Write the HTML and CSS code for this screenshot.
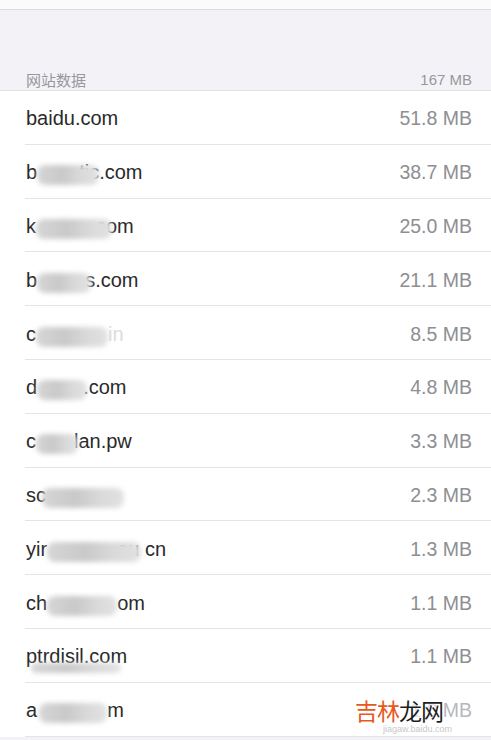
FILE: index.html
```html
<!DOCTYPE html>
<html lang="zh">
<head>
<meta charset="utf-8">
<link rel="stylesheet" href="styles.css">
</head>
<body>
<div class="page">
  <div class="topbar"></div>
  <div class="section-head">
    <span class="head-title">网站数据</span>
    <span class="head-size">167 MB</span>
  </div>
  <ul class="list">
    <li class="row"><span class="site">baidu.com</span><span class="size">51.8 MB</span></li>
    <li class="row"><span class="site">b<span class="smear s-2"></span>tic.com</span><span class="size">38.7 MB</span></li>
    <li class="row"><span class="site">k<span class="smear s-3"></span>com</span><span class="size">25.0 MB</span></li>
    <li class="row"><span class="site">b<span class="smear s-4"></span>s.com</span><span class="size">21.1 MB</span></li>
    <li class="row"><span class="site">c<span class="smear s-5"></span><span class="faint">in</span></span><span class="size">8.5 MB</span></li>
    <li class="row"><span class="site">d<span class="smear s-6"></span>.com</span><span class="size">4.8 MB</span></li>
    <li class="row"><span class="site">c<span class="smear s-7"></span>lan.pw</span><span class="size">3.3 MB</span></li>
    <li class="row"><span class="site">sc<span class="smear s-8"></span></span><span class="size">2.3 MB</span></li>
    <li class="row"><span class="site">yir<span class="smear s-9"></span>ou cn</span><span class="size">1.3 MB</span></li>
    <li class="row"><span class="site">ch<span class="smear s-10"></span>om</span><span class="size">1.1 MB</span></li>
    <li class="row"><span class="site">ptrdisil.com<span class="smear s-11"></span></span><span class="size">1.1 MB</span></li>
    <li class="row"><span class="site">a<span class="smear s-12"></span>m</span><span class="size size-hidden">1.0 MB</span></li>
  </ul>
  <div class="watermark">
    <span class="wm-main"><span class="wm-orange">吉林</span>龙网</span>
    <span class="wm-sub">jiagaw.baidu.com</span>
  </div>
</div>
</body>
</html>
```
FILE: styles.css
```css
* { box-sizing: border-box; }
html, body { margin: 0; padding: 0; }
body {
  width: 491px;
  height: 740px;
  overflow: hidden;
  background: #ffffff;
  font-family: "Liberation Sans", "Noto Sans CJK SC", sans-serif;
}
.page {
  position: relative;
  width: 491px;
  height: 740px;
  background: #f3f3f7;
}
.topbar {
  height: 10px;
  background: #fbfbfc;
  border-bottom: 1px solid #dcdce0;
}
.section-head {
  height: 80px;
  display: flex;
  justify-content: space-between;
  align-items: flex-end;
  padding: 0 19px 1px 26px;
  color: #8e8e93;
}
.head-title { font-family: "Noto Sans CJK SC", sans-serif; font-size: 15px; line-height: 18px; color: #98989c; }
.head-size { font-size: 15px; line-height: 18px; color: #98989c; }
.list {
  list-style: none;
  margin: 0;
  padding: 0 0 0 25px;
  background: #ffffff;
  border-top: 1px solid #e2e2e6;
}
.row {
  height: 53.8px;
  display: flex;
  align-items: center;
  justify-content: space-between;
  padding-right: 19px;
  padding-top: 3px;
  border-bottom: 1px solid #e4e4e8;
}
.site {
  font-size: 20px;
  color: #2a2a2a;
  padding-left: 1px;
  white-space: nowrap;
  display: flex;
  align-items: center;
}
.size {
  font-size: 19.5px;
  color: #8e8e93;
}
.size-hidden { color: #b8b8bc; }
.faint { color: #dcdcdc; }
.smear {
  display: inline-block;
  height: 20px;
  background: linear-gradient(90deg, #d6d6d6, #c9c9c9 40%, #d9d9d9 70%, #e2e2e2);
  border-radius: 8px;
  filter: blur(2.5px);
  margin-top: 5px;
}
.s-2 { width: 62px; margin-right: -20px; }
.s-3 { width: 76px; margin-right: -16px; }
.s-4 { width: 54px; margin-right: -6px; }
.s-5 { width: 72px; }
.s-6 { width: 50px; margin-right: -4px; }
.s-7 { width: 42px; margin-right: -4px; }
.s-8 { width: 82px; margin-left: -4px; }
.s-9 { width: 94px; margin-right: -24px; }
.s-10 { width: 70px; }
.s-11 { width: 90px; margin-left: -96px; height: 10px; margin-top: 22px; }
.s-12 { width: 68px; margin-left: 2px; }
.watermark {
  position: absolute;
  left: 355px;
  top: 696px;
  display: flex;
  flex-direction: column;
  align-items: flex-start;
}
.wm-main {
  font-family: "Noto Sans CJK SC", sans-serif;
  font-size: 23px;
  line-height: 28px;
  color: #1e1e1e;
  letter-spacing: -1px;
  background: rgba(255, 255, 255, 0.6);
}
.wm-orange { color: #e8581c; }
.wm-sub {
  font-size: 9px;
  color: #c8c8c8;
  line-height: 11px;
  margin-left: 28px;
}
```
